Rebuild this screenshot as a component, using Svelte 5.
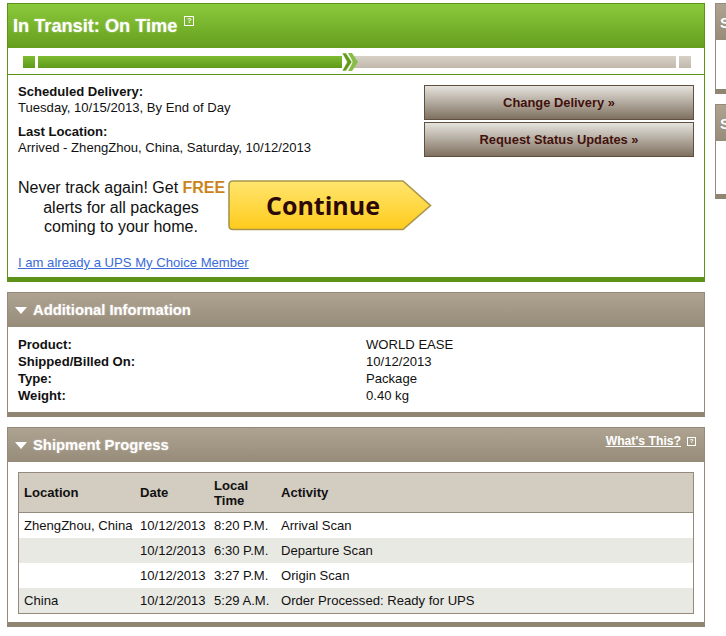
<script>
  const info = [
    ['Product:', 'WORLD EASE'],
    ['Shipped/Billed On:', '10/12/2013'],
    ['Type:', 'Package'],
    ['Weight:', '0.40 kg']
  ];

  const scans = [
    { location: 'ZhengZhou, China', date: '10/12/2013', time: '8:20 P.M.', activity: 'Arrival Scan' },
    { location: '', date: '10/12/2013', time: '6:30 P.M.', activity: 'Departure Scan' },
    { location: '', date: '10/12/2013', time: '3:27 P.M.', activity: 'Origin Scan' },
    { location: 'China', date: '10/12/2013', time: '5:29 A.M.', activity: 'Order Processed: Ready for UPS' }
  ];
</script>

<div class="page">
  <main class="column">
    <section class="card status">
      <header class="status-head">
        <h1>In Transit: On Time</h1>
        <span class="help">?</span>
      </header>

      <div class="progress">
        <span class="seg done small"></span>
        <span class="seg done long"></span>
        <svg class="chevrons" width="16" height="18" viewBox="0 0 16 18">
          <path d="M6 0h4l6 9-6 9H6l5-9z" fill="#86bd45" />
          <path d="M0 0h4l6 9-6 9H0l5-9z" fill="#5f9a1a" stroke="#fff" stroke-width="0.600" />
        </svg>
        <span class="seg todo long-todo"></span>
        <span class="seg todo small"></span>
      </div>

      <div class="details">
        <div class="facts">
          <p class="fact"><strong>Scheduled Delivery:</strong><br />Tuesday, 10/15/2013, By End of Day</p>
          <p class="fact"><strong>Last Location:</strong><br />Arrived - ZhengZhou, China, Saturday, 10/12/2013</p>
        </div>
        <div class="actions">
          <button>Change Delivery »</button>
          <button>Request Status Updates »</button>
        </div>
      </div>

      <div class="promo">
        <p>Never track again! Get <b>FREE</b><br />alerts for all packages<br />coming to your home.</p>
        <svg class="continue" width="204" height="51" viewBox="0 0 204 51">
          <defs>
            <linearGradient id="gold" x1="0" y1="0" x2="0" y2="1">
              <stop offset="0" stop-color="#ffe56e" />
              <stop offset="1" stop-color="#fecb1c" />
            </linearGradient>
          </defs>
          <path d="M5 1H175L202.500 25.500 175 49.500H5Q1 49.500 1 45.500V5Q1 1 5 1Z" fill="url(#gold)" stroke="#a8954a" stroke-width="1.600" />
          <text x="95" y="34.500" text-anchor="middle">Continue</text>
        </svg>
      </div>

      <a class="member" href="#member">I am already a UPS My Choice Member</a>
    </section>

    <section class="card info">
      <header class="brown-head">
        <span class="arrow"></span>
        <h2>Additional Information</h2>
      </header>
      <div class="rows">
        {#each info as [label, value]}
          <div class="row">
            <strong>{label}</strong>
            <span>{value}</span>
          </div>
        {/each}
      </div>
    </section>

    <section class="card shipment">
      <header class="brown-head">
        <span class="arrow"></span>
        <h2>Shipment Progress</h2>
        <a class="whats" href="#whats">What's This?</a>
        <span class="help dim">?</span>
      </header>
      <div class="table-wrap">
        <table>
          <thead>
            <tr>
              <th class="c-loc">Location</th>
              <th class="c-date">Date</th>
              <th class="c-time">Local<br />Time</th>
              <th>Activity</th>
            </tr>
          </thead>
          <tbody>
            {#each scans as scan}
              <tr>
                <td>{scan.location}</td>
                <td>{scan.date}</td>
                <td>{scan.time}</td>
                <td>{scan.activity}</td>
              </tr>
            {/each}
          </tbody>
        </table>
      </div>
    </section>
  </main>

  <aside class="side">
    <div class="side-card first"><div class="side-head">S</div></div>
    <div class="side-card second"><div class="side-head">S</div></div>
  </aside>
</div>

<style>
  :global(body) {
    background: #fff;
    overflow: hidden;
  }

  .page {
    display: flex;
    gap: 10px;
    padding: 3px 0 0 7px;
    font-family: "Liberation Sans", Arial, sans-serif;
    font-size: 13.100px;
    color: #111;
  }

  .column {
    width: 698px;
    flex: none;
    display: flex;
    flex-direction: column;
    gap: 10px;
  }

  .card {
    border: 1px solid #94897a;
    border-bottom: 5px solid #908571;
    background: #fff;
  }

  /* green status card */
  .status {
    border-color: #5d9318;
    height: 279px;
    box-sizing: border-box;
    position: relative;
  }

  .status-head {
    height: 44px;
    display: flex;
    align-items: flex-start;
    padding-left: 5px;
    background: linear-gradient(#8bc93c, #659e1d);
  }

  h1 {
    margin: 11px 0 0;
    font-size: 18.200px;
    line-height: 22px;
    color: #fff;
    text-shadow: 0 0 2px rgba(255, 255, 255, 0.5);
  }

  .help {
    width: 8px;
    height: 8px;
    margin: 12px 0 0 7px;
    border: 1px solid #fff;
    color: #fff;
    font-size: 7px;
    font-weight: bold;
    line-height: 8px;
    text-align: center;
  }

  .progress {
    height: 27px;
    box-sizing: border-box;
    padding: 8px 0 0 15px;
    display: flex;
    border-bottom: 1px solid #5d9318;
  }

  .seg {
    height: 12px;
  }

  .done {
    background: linear-gradient(#7fbb32, #5f9a1a);
  }

  .todo {
    background: linear-gradient(#d6d0c6, #c2b9ac);
  }

  .small {
    width: 12px;
  }

  .long {
    width: 304px;
    margin-left: 3px;
  }

  .chevrons {
    margin-top: -3px;
    position: relative;
    z-index: 1;
  }

  .long-todo {
    width: 324px;
    margin: 0 3px 0 -6px;
  }

  .details {
    display: flex;
    justify-content: space-between;
    padding: 10px 10px 0;
  }

  .facts {
    margin-top: -1px;
  }

  .fact {
    margin: 0;
    line-height: 16px;
  }

  .fact + .fact {
    margin-top: 8px;
  }

  .actions {
    width: 270px;
    display: flex;
    flex-direction: column;
    gap: 2px;
  }

  button {
    height: 35px;
    padding: 0;
    border: 1px solid #5f5040;
    background: linear-gradient(#e5e3dd, #7f7160);
    color: #43110c;
    font-family: inherit;
    font-size: 12.900px;
    font-weight: bold;
  }

  .promo {
    display: flex;
    margin-top: 23px;
    padding-left: 10px;
  }

  .promo p {
    width: 206px;
    margin: -2px 4px 0 0;
    font-size: 16px;
    line-height: 19.500px;
    text-align: center;
    color: #111;
    white-space: nowrap;
  }

  .promo b {
    color: #c9851a;
  }

  .continue text {
    font-family: "Open Sans", sans-serif;
    font-size: 25px;
    font-weight: bold;
    fill: #2c0806;
  }

  .member {
    position: absolute;
    left: 10px;
    top: 251px;
    color: #3a6bd8;
    font-size: 13.100px;
  }

  /* brown sections */
  .brown-head {
    height: 34px;
    display: flex;
    align-items: center;
    padding-left: 7px;
    background: linear-gradient(#aea391, #978b79);
    position: relative;
  }

  .arrow {
    width: 0;
    height: 0;
    border-left: 6px solid transparent;
    border-right: 6px solid transparent;
    border-top: 7px solid #fff;
    margin-right: 6px;
  }

  h2 {
    margin: 0;
    font-size: 14.800px;
    color: #fff;
    text-shadow: 0 0 2px rgba(255, 255, 255, 0.5);
  }

  .rows {
    padding: 9px 10px 8px;
  }

  .row {
    display: flex;
    line-height: 17px;
  }

  .row strong {
    width: 348px;
  }

  .whats {
    margin-left: auto;
    margin-bottom: 8px;
    color: #fff;
    font-size: 12.200px;
    font-weight: bold;
  }

  .help.dim {
    align-self: flex-start;
    margin: 9px 8px 0 6px;
    width: 7px;
    height: 7px;
    line-height: 7px;
    font-size: 6px;
  }

  .table-wrap {
    padding: 10px 10px 8px;
  }

  table {
    width: 100%;
    border: 1px solid #94897a;
    border-collapse: collapse;
  }

  thead tr {
    height: 40px;
    background: #d3ccc0;
    border-bottom: 1px solid #94897a;
  }

  th {
    text-align: left;
    padding: 0 0 0 5px;
    line-height: 15px;
  }

  td {
    height: 25px;
    padding: 0 0 0 5px;
  }

  tbody tr:nth-child(even) {
    background: #e9e9e4;
  }

  .c-loc {
    width: 111px;
  }

  .c-date {
    width: 69px;
  }

  .c-time {
    width: 62px;
  }

  /* cut-off sidebar on the right */
  .side {
    width: 11px;
    flex: none;
    display: flex;
    flex-direction: column;
    gap: 10px;
  }

  .side-card {
    box-sizing: border-box;
    border: 1px solid #94897a;
    border-bottom: 5px solid #908571;
    border-right: none;
    overflow: hidden;
  }

  .first {
    height: 91px;
  }

  .second {
    height: 95px;
  }

  .side-head {
    height: 36px;
    padding: 11px 0 0 4px;
    box-sizing: border-box;
    background: linear-gradient(#aea391, #978b79);
    color: #fff;
    font-weight: bold;
    font-size: 14.800px;
  }
</style>
